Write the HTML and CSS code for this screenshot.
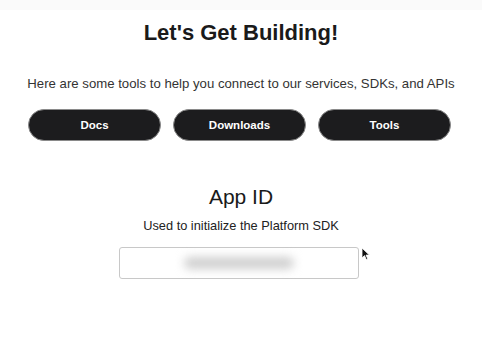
FILE: index.html
```html
<!DOCTYPE html>
<html lang="en">
  <head>
    <meta charset="UTF-8" />
    <meta name="viewport" content="width=device-width, initial-scale=1.0" />
    <title>Let's Get Building</title>
    <link rel="stylesheet" href="styles.css">
  </head>
  <body>
    <div class="top-bar"></div>
    <main class="page">
      <h1 class="title">Let's Get Building!</h1>
      <p class="intro">Here are some tools to help you connect to our services, SDKs, and APIs</p>

      <div class="links">
        <a class="btn" href="#">Docs</a>
        <a class="btn" href="#">Downloads</a>
        <a class="btn" href="#">Tools</a>
      </div>

      <section class="app-id">
        <h2>App ID</h2>
        <p>Used to initialize the Platform SDK</p>
        <div class="field-wrap">
          <div class="field">
            <span class="secret"></span>
          </div>
          <svg class="cursor" width="10" height="14" viewBox="0 0 10 14">
            <path d="M1 1 L1 11 L3.5 8.6 L5.3 12.6 L6.8 12 L5 8.1 L8.4 8.1 Z" fill="#111" stroke="#fff" stroke-width="0.8"/>
          </svg>
        </div>
      </section>
    </main>
  </body>
</html>
```

FILE: styles.css
```css
* {
  margin: 0;
  padding: 0;
  box-sizing: border-box;
}

body {
  font-family: "Liberation Sans", Arial, sans-serif;
  background: #fff;
  color: #1a1a1a;
}

.top-bar {
  height: 10px;
  background: #fafafa;
}

.page {
  display: flex;
  flex-direction: column;
  align-items: center;
}

.title {
  font-size: 22px;
  font-weight: bold;
  margin-top: 10px;
  line-height: 26px;
}

.intro {
  font-size: 13.2px;
  color: #333;
  margin-top: 30px;
  line-height: 16px;
}

.links {
  display: flex;
  gap: 12px;
  margin-top: 17px;
  margin-right: 3px;
}

.btn {
  display: flex;
  align-items: center;
  justify-content: center;
  width: 133px;
  height: 32px;
  background: #1c1c1e;
  border: 1px solid #8a8a8a;
  border-radius: 16px;
  color: #fff;
  font-size: 11.5px;
  font-weight: bold;
  text-decoration: none;
}

.app-id {
  display: flex;
  flex-direction: column;
  align-items: center;
  margin-top: 44px;
}

.app-id h2 {
  font-size: 21px;
  font-weight: normal;
  line-height: 24px;
}

.app-id p {
  font-size: 12.8px;
  color: #222;
  margin-top: 9px;
  line-height: 15px;
}

.field-wrap {
  position: relative;
  margin-top: 14px;
  margin-right: 4px;
}

.field {
  width: 240px;
  height: 32px;
  border: 1px solid #c8c8c8;
  border-radius: 3px;
  display: flex;
  align-items: center;
  justify-content: center;
}

.secret {
  display: block;
  width: 110px;
  height: 12px;
  border-radius: 6px;
  background: #cfcfcf;
  filter: blur(5px);
}

.cursor {
  position: absolute;
  left: 242px;
  top: 0;
}
```
